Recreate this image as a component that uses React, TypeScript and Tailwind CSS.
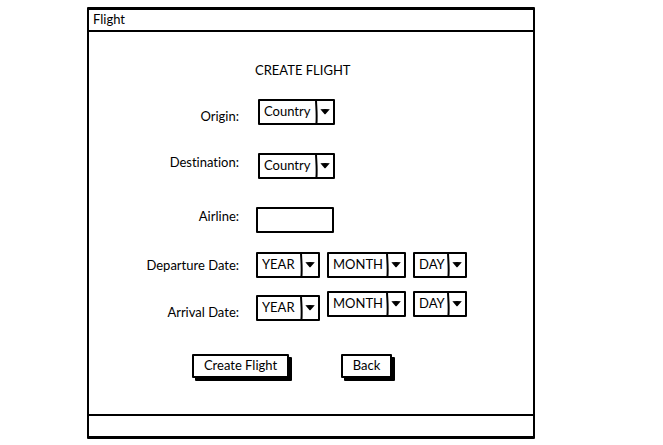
import { useId, type ReactNode } from "react";

function Dropdown({ label, width, className = "" }: { label: string; width: string; className?: string }) {
  return (
    <div className={`relative h-[26px] ${width} ${className}`}>
      <select
        aria-label={label}
        className="block h-full w-full appearance-none rounded-[1px] border-2 border-black bg-white pb-[2px] pl-1 text-[13px] leading-[18px] text-black outline-none"
      >
        <option>{label}</option>
      </select>
      <svg
        aria-hidden="true"
        viewBox="0 0 20 26"
        className="pointer-events-none absolute top-0 right-0 h-full w-5"
      >
        <path d="M1 1C1.2 8 2.2 16 1.4 25" fill="none" stroke="black" strokeWidth="2" />
        <path d="M5.4 10.2Q10 9.8 14.8 10.2L10.4 15.2H9.6Z" fill="black" />
      </svg>
    </div>
  );
}

function Row({
  label,
  align,
  gap,
  htmlFor,
  children,
}: {
  label: string;
  align: string;
  gap: string;
  htmlFor?: string;
  children: ReactNode;
}) {
  const labelClass = `w-[150px] text-right ${align}`;
  return (
    <div className={`flex ${gap}`}>
      {htmlFor ? (
        <label htmlFor={htmlFor} className={labelClass}>
          {label}
        </label>
      ) : (
        <span className={labelClass}>{label}</span>
      )}
      <div className="flex gap-[7px]">{children}</div>
    </div>
  );
}

function SketchButton({ children, width }: { children: ReactNode; width: string }) {
  return (
    <button
      type="button"
      className={`h-6 rounded-[1px] border-2 border-black bg-white pb-[2px] shadow-[3px_3px_0_black] ${width}`}
    >
      {children}
    </button>
  );
}

export default function App() {
  const airlineId = useId();
  return (
    <main className="min-h-screen bg-white pt-[7px] pr-32 pl-[87px] font-['Lato',sans-serif] text-[13px] leading-[18px] text-black [font-variant-ligatures:none]">
      <section className="rounded-[1px] border-x-2 border-y-3 border-black">
        <header className="border-b-2 border-black px-1 pb-[2px]">Flight</header>
        <form className="pt-[29px] pb-9">
          <h1 className="ml-[166px]">CREATE FLIGHT</h1>
          <div className="mt-5 flex flex-col gap-7">
            <Row label="Origin:" align="self-end" gap="gap-[19px]">
              <Dropdown label="Country" width="w-[77px]" />
            </Row>
            <Row label="Destination:" align="self-start" gap="gap-[19px]">
              <Dropdown label="Country" width="w-[77px]" />
            </Row>
            <Row label="Airline:" align="self-start" gap="gap-[17px]" htmlFor={airlineId}>
              <input
                id={airlineId}
                type="text"
                className="h-[26px] w-[78px] rounded-[1px] border-2 border-black bg-white px-1 outline-none"
              />
            </Row>
          </div>
          <div className="mt-[19px] flex flex-col gap-[13px]">
            <Row label="Departure Date:" align="self-center" gap="gap-[17px]">
              <Dropdown label="YEAR" width="w-16" />
              <Dropdown label="MONTH" width="w-[79px]" />
              <Dropdown label="DAY" width="w-[54px]" />
            </Row>
            <Row label="Arrival Date:" align="self-end" gap="gap-[17px]">
              <Dropdown label="YEAR" width="w-16" className="mt-1" />
              <Dropdown label="MONTH" width="w-[79px]" />
              <Dropdown label="DAY" width="w-[54px]" />
            </Row>
          </div>
          <div className="mt-[33px] ml-[103px] flex gap-[52px]">
            <SketchButton width="w-[97px]">Create Flight</SketchButton>
            <SketchButton width="w-[51px]">Back</SketchButton>
          </div>
        </form>
        <footer className="h-[22px] border-t-2 border-black" />
      </section>
    </main>
  );
}
